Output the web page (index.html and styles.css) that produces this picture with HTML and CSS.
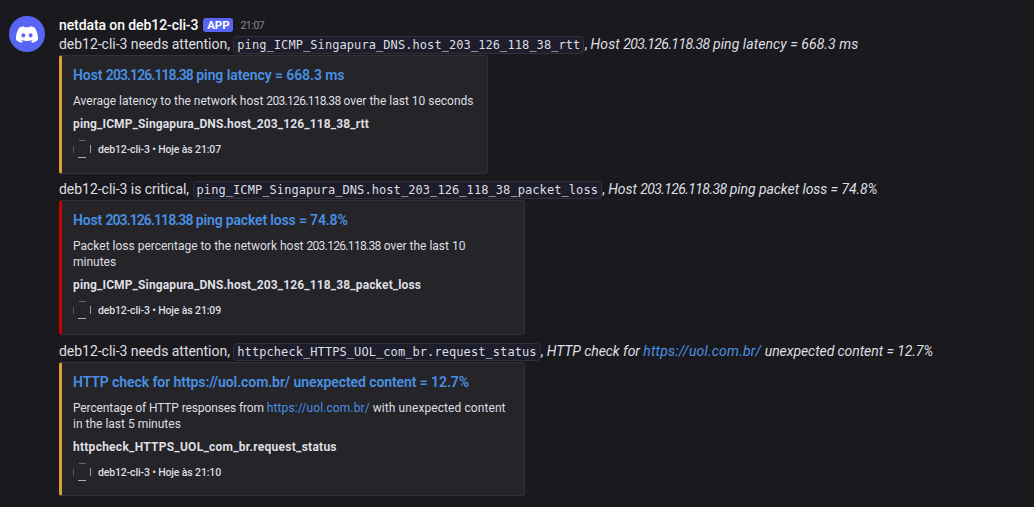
FILE: index.html
```html
<!DOCTYPE html>
<html lang="pt-BR">
<head>
<meta charset="utf-8">
<title>netdata alerts</title>
<link rel="stylesheet" href="styles.css">
</head>
<body>
<div class="group">
  <div class="avatar">
    <svg class="logo" viewBox="0 0 127.14 96.36"><path fill="#fff" d="M107.7 8.07A105.15 105.15 0 0 0 81.47 0a72.06 72.06 0 0 0-3.36 6.83 97.68 97.68 0 0 0-29.11 0A72.37 72.37 0 0 0 45.64 0a105.89 105.89 0 0 0-26.25 8.09C2.79 32.65-1.71 56.6.54 80.21a105.73 105.73 0 0 0 32.17 16.15 77.7 77.7 0 0 0 6.89-11.11 68.42 68.42 0 0 1-10.85-5.18c.91-.66 1.8-1.34 2.66-2a75.57 75.57 0 0 0 64.32 0c.87.71 1.76 1.39 2.66 2a68.68 68.68 0 0 1-10.87 5.19 77 77 0 0 0 6.89 11.1 105.25 105.25 0 0 0 32.19-16.14c2.64-27.38-4.51-51.11-18.9-72.15ZM42.45 65.69C36.18 65.69 31 60 31 53s5-12.74 11.43-12.74S54 46 53.89 53s-5.05 12.69-11.44 12.69Zm42.24 0C78.41 65.69 73.25 60 73.25 53s5-12.74 11.44-12.74S96.23 46 96.12 53s-5.04 12.69-11.43 12.69Z"/></svg>
  </div>
  <main class="content">
    <header class="author"><span class="name">netdata on deb12-cli-3</span><span class="tag">APP</span><time class="time">21:07</time></header>

    <p class="message">deb12-cli-3 needs attention, <code class="code">ping_ICMP_Singapura_DNS.host_203_126_118_38_rtt</code>, <em class="summary">Host <span class="ip">203.126.118.38</span> ping latency = 668.3 ms</em></p>
    <article class="embed warning compact">
      <h2 class="title">Host <span class="ip">203.126.118.38</span> ping latency = 668.3 ms</h2>
      <p class="description">Average latency to the network host <span class="ip">203.126.118.38</span> over the last 10 seconds</p>
      <h3 class="field">ping_ICMP_Singapura_DNS.host_203_126_118_38_rtt</h3>
      <footer class="footer"><span class="icon"></span>deb12-cli-3 • Hoje às 21:07</footer>
    </article>

    <p class="message">deb12-cli-3 is critical, <code class="code">ping_ICMP_Singapura_DNS.host_203_126_118_38_packet_loss</code>, <em class="summary loss">Host <span class="ip">203.126.118.38</span> ping packet loss = 74.8%</em></p>
    <article class="embed critical">
      <h2 class="title loss">Host <span class="ip">203.126.118.38</span> ping packet loss = 74.8%</h2>
      <p class="description">Packet loss percentage to the network host <span class="ip">203.126.118.38</span> over the last 10<br>minutes</p>
      <h3 class="field">ping_ICMP_Singapura_DNS.host_203_126_118_38_packet_loss</h3>
      <footer class="footer"><span class="icon"></span>deb12-cli-3 • Hoje às 21:09</footer>
    </article>

    <p class="message last">deb12-cli-3 needs attention, <code class="code">httpcheck_HTTPS_UOL_com_br.request_status</code>, <em class="summary loss">HTTP check for <a class="link">https://uol.com.br/</a> unexpected content = 12.7%</em></p>
    <article class="embed warning http">
      <h2 class="title">HTTP check for https://uol.com.br/ unexpected content = 12.7%</h2>
      <p class="description"><span class="lead">Percentage of HTTP responses from </span><a class="link">https://uol.com.br/</a><span class="rest"> with unexpected content</span><br>in the last 5 minutes</p>
      <h3 class="field web">httpcheck_HTTPS_UOL_com_br.request_status</h3>
      <footer class="footer"><span class="icon"></span>deb12-cli-3 • Hoje às 21:10</footer>
    </article>
  </main>
</div>
</body>
</html>
```
FILE: styles.css
```css
* { box-sizing: border-box; }
body {
  margin: 0;
  background: #1a1a1e;
  color: #dfdfe2;
  font-family: Roboto, "Liberation Sans", sans-serif;
  font-size: 14px;
}
h2, h3, p { margin: 0; }
.group { display: flex; gap: 14px; padding: 16px 0 0 9px; }
.avatar {
  display: flex; align-items: center; justify-content: center;
  width: 36px; height: 36px; border-radius: 50%;
  background: #5865f2;
}
.logo { width: 22px; height: 17px; }
.content { white-space: nowrap; }
.author { display: flex; align-items: center; height: 18px; }
.name { color: #fbfbfb; font-weight: 500; letter-spacing: -.09px; }
.tag {
  width: 30px; height: 14px; margin: 0 7px 0 5px;
  border-radius: 3px; background: #5865f2; color: #fff;
  font-size: 11.5px; font-weight: 700; line-height: 14px; text-align: center;
}
.time { color: #88898f; font-size: 10.5px; letter-spacing: -.45px; line-height: 18px; padding-top: 1px; }
.message { height: 20px; line-height: 21px; letter-spacing: -.03px; }
.embed + .message { margin-top: 5px; }
.embed + .last { margin-top: 6px; }
.code {
  display: inline-block; height: 18px; padding: 0 3px;
  border: 1px solid #30303e; border-radius: 4px; background: #1d1d2b;
  font: 12px/17px "DejaVu Sans Mono", monospace; letter-spacing: .075px;
  vertical-align: top; margin-top: 2px;
}
.summary { letter-spacing: .07px; }
.loss { letter-spacing: -.07px; }
.summary .ip { letter-spacing: -.6px; }
.summary .link { letter-spacing: .2px; }
.link { color: #4a90e2; }
.embed {
  width: 466px; margin-top: 1px; padding: 10px 11px 15px;
  border: 1px solid #313136; border-left: 3px solid; border-radius: 3px;
  background: #242429;
}
.compact { width: 429px; }
.http { padding-bottom: 14px; }
.warning { border-left-color: #daa038; }
.critical { border-left-color: #cc0000; }
.title { color: #4a90e2; font-size: 14px; font-weight: 600; line-height: 18px; letter-spacing: -.08px; }
.title.loss { letter-spacing: -.16px; }
.title .ip { letter-spacing: -.92px; }
.description { margin-top: 9px; font-size: 12px; line-height: 16px; }
.description .ip { letter-spacing: -.68px; }
.description .link { letter-spacing: .1px; }
.lead { letter-spacing: -.12px; }
.rest { letter-spacing: .08px; }
.field { margin-top: 7px; font-size: 12px; font-weight: 700; line-height: 17px; letter-spacing: .13px; }
.web { letter-spacing: .26px; }
.footer { display: flex; align-items: center; gap: 7px; margin-top: 7px; height: 18px; font-size: 10.5px; font-weight: 500; letter-spacing: -.14px; }
.icon {
  width: 18px; height: 18px;
  background:
    linear-gradient(#66666a, #66666a) center top / 7px 1px,
    linear-gradient(#b0b0b3, #b0b0b3) center bottom / 8px 1px,
    linear-gradient(#58585c, #58585c) left center / 1px 7px,
    linear-gradient(#a0a0a4, #a0a0a4) right center / 1px 8px;
  background-repeat: no-repeat;
}
```
